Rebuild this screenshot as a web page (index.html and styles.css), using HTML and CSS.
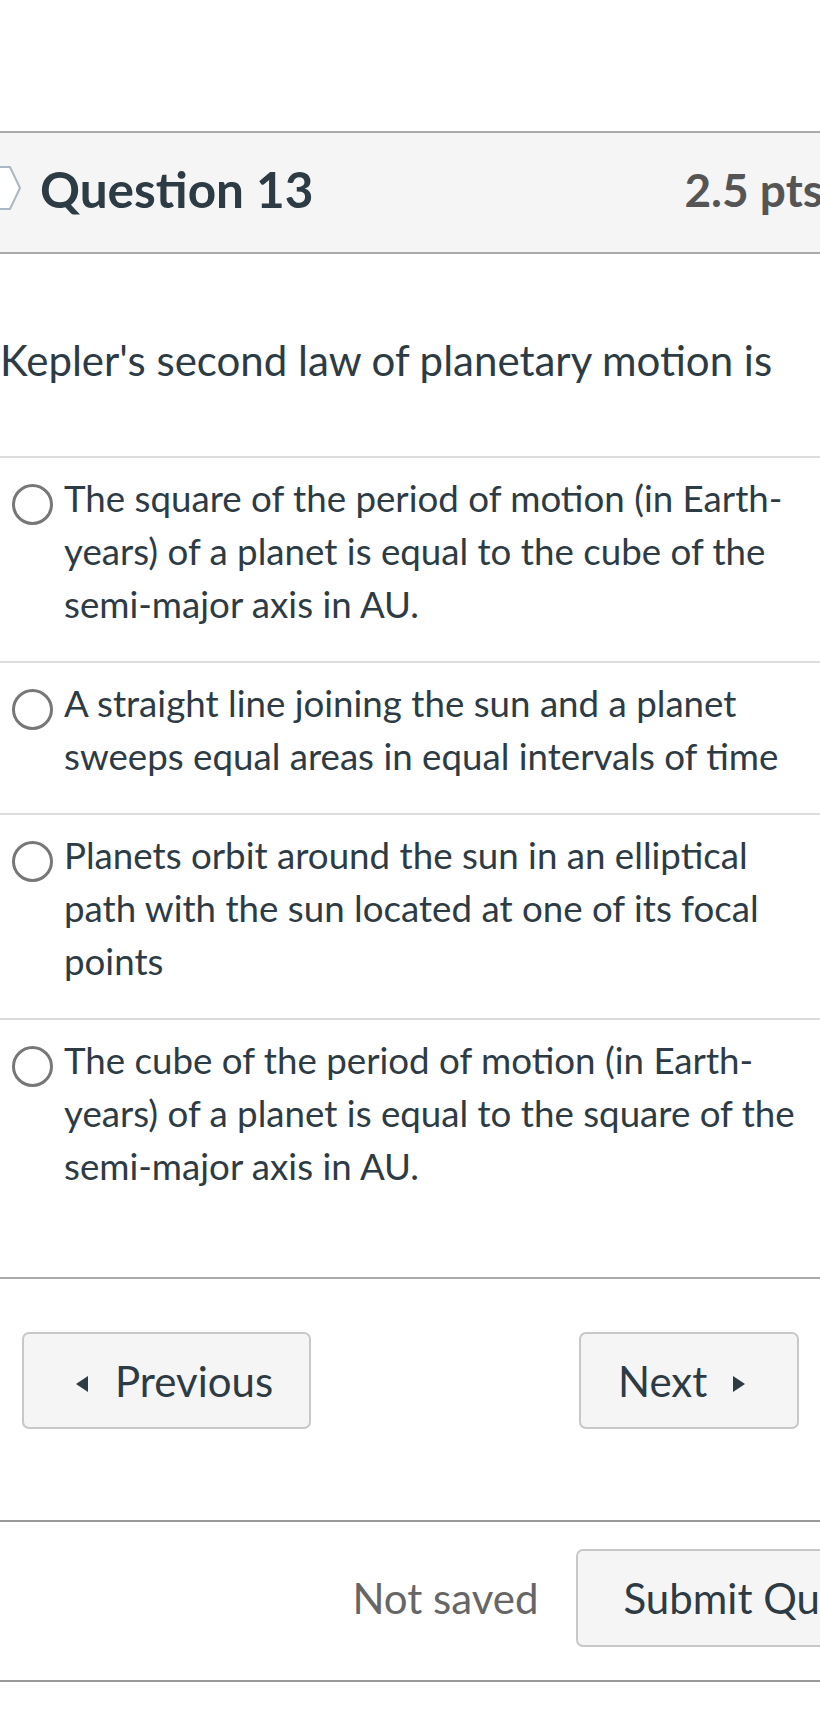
FILE: index.html
```html
<!DOCTYPE html>
<html lang="en">
<head>
<meta charset="utf-8">
<title>Quiz – Question 13</title>
<link rel="stylesheet" href="styles.css">
</head>
<body>
<main class="quiz">
  <section class="question">
    <header class="q-header">
      <svg class="flag" width="22" height="46" viewBox="0 0 22 46" aria-hidden="true">
        <polygon points="-12,2 10,2 20,23 10,44 -12,44" fill="#ffffff" stroke="#a9b8c4" stroke-width="2" stroke-linejoin="round"/>
      </svg>
      <h2 class="q-title">Question 13</h2>
      <span class="q-points">2.5 pts</span>
    </header>
    <div class="q-text">Kepler's second law of planetary motion is</div>
    <div class="answers">
      <label class="answer"><span class="radio"></span><span class="answer-text">The square of the period of motion (in Earth-years) of a planet is equal to the cube of the semi-major axis in AU.</span></label>
      <label class="answer"><span class="radio"></span><span class="answer-text">A straight line joining the sun and a planet sweeps equal areas in equal intervals of time</span></label>
      <label class="answer"><span class="radio"></span><span class="answer-text">Planets orbit around the sun in an elliptical path with the sun located at one of its focal points</span></label>
      <label class="answer"><span class="radio"></span><span class="answer-text">The cube of the period of motion (in Earth-years) of a planet is equal to the square of the semi-major axis in AU.</span></label>
    </div>
  </section>
  <nav class="q-nav">
    <button class="btn btn-prev" type="button"><span class="tri tri-left"></span>Previous</button>
    <button class="btn btn-next" type="button">Next<span class="tri tri-right"></span></button>
  </nav>
  <footer class="submit-bar">
    <span class="save-status">Not saved</span>
    <button class="btn btn-submit" type="button">Submit Quiz</button>
  </footer>
</main>
</body>
</html>
```
FILE: styles.css
```css
html, body {
  margin: 0;
  padding: 0;
  background: #ffffff;
}
body {
  overflow-x: hidden;
  font-family: Lato, "Liberation Sans", sans-serif;
  color: #2d3b45;
}
.quiz {
  padding-top: 131px;
}
.q-header {
  display: flex;
  align-items: center;
  height: 113px;
  padding-bottom: 6px;
  background: #f5f5f5;
  border-top: 2px solid #aaaaaa;
  border-bottom: 2px solid #aaaaaa;
  margin-right: -60px;
  padding-right: 57px;
}
.flag {
  flex: none;
  display: block;
  margin-right: 18px;
  margin-top: -4px;
}
.q-title {
  margin: 0;
  font-size: 49.5px;
  font-weight: 700;
  line-height: 1;
  flex: 1;
}
.q-points {
  font-size: 46px;
  font-weight: 700;
  color: #555555;
  line-height: 1;
}
.q-text {
  padding: 76px 0 66px;
  font-size: 42px;
  font-weight: 400;
  line-height: 60px;
}
.answers {
  border-top: 2px solid #dddddd;
  padding-bottom: 54px;
}
.answer {
  display: flex;
  align-items: flex-start;
  padding: 14px 0 30px 12px;
  border-bottom: 2px solid #dddddd;
}
.answer:last-child {
  border-bottom: none;
}
.radio {
  flex: none;
  box-sizing: border-box;
  width: 41px;
  height: 41px;
  margin-top: 12px;
  border: 3px solid #777777;
  border-radius: 50%;
  background: #ffffff;
}
.answer-text {
  margin-left: 11px;
  width: 748px;
  font-size: 36.7px;
  line-height: 53px;
}
.q-nav {
  display: flex;
  justify-content: space-between;
  border-top: 2px solid #aaaaaa;
  padding: 53px 21px 91px 22px;
}
.btn {
  display: inline-flex;
  align-items: center;
  box-sizing: border-box;
  height: 97px;
  margin: 0;
  border: 2px solid #c8c8c8;
  border-radius: 7px;
  background: #f5f5f5;
  font-family: Lato, "Liberation Sans", sans-serif;
  font-size: 42px;
  color: #2d3b45;
  cursor: pointer;
}
.btn-prev {
  width: 289px;
  padding: 0 0 0 52px;
}
.btn-next {
  width: 220px;
  padding: 0 0 0 37px;
}
.tri {
  display: inline-block;
  width: 0;
  height: 0;
  border-top: 8px solid transparent;
  border-bottom: 8px solid transparent;
  margin-top: 6px;
}
.tri-left {
  border-right: 12px solid #2d3b45;
  margin-right: 27px;
}
.tri-right {
  border-left: 12px solid #2d3b45;
  margin-left: 26px;
}
.submit-bar {
  display: flex;
  align-items: center;
  justify-content: flex-end;
  gap: 38px;
  border-top: 2px solid #9a9a9a;
  border-bottom: 2px solid #9a9a9a;
  padding: 27px 0 33px;
  margin-right: -76px;
}
.save-status {
  font-size: 42px;
  color: #666666;
}
.btn-submit {
  height: 98px;
  padding: 0 45px;
}
```
